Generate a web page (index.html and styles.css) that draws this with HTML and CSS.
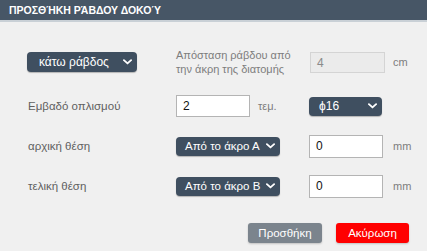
FILE: index.html
```html
<!DOCTYPE html>
<html>
<head>
<meta charset="utf-8">
<link rel="stylesheet" href="styles.css">
</head>
<body>
<div class="dialog">
  <div class="header">ΠΡΟΣΘΉΚΗ ΡΆΒΔΟΥ ΔΟΚΟΎ</div>
  <div class="form">
    <div class="select sel-bar"><span>κάτω ράβδος</span><svg class="chev" viewBox="0 0 10 6"><path d="M1 1 L5 4.6 L9 1" /></svg></div>
    <div class="hint">Απόσταση ράβδου από<br>την άκρη της διατομής</div>
    <div class="input disabled in-dist">4</div>
    <div class="unit">cm</div>

    <div class="label">Εμβαδό οπλισμού</div>
    <div class="input in-count">2</div>
    <div class="unit">τεμ.</div>
    <div class="select sel-dia"><span>ϕ16</span><svg class="chev" viewBox="0 0 10 6"><path d="M1 1 L5 4.6 L9 1" /></svg></div>
    <div></div>

    <div class="label">αρχική θέση</div>
    <div class="select sel-pos"><span>Από το άκρο Α</span><svg class="chev" viewBox="0 0 10 6"><path d="M1 1 L5 4.6 L9 1" /></svg></div>
    <div class="input in-pos">0</div>
    <div class="unit">mm</div>

    <div class="label">τελική θέση</div>
    <div class="select sel-pos"><span>Από το άκρο Β</span><svg class="chev" viewBox="0 0 10 6"><path d="M1 1 L5 4.6 L9 1" /></svg></div>
    <div class="input in-pos">0</div>
    <div class="unit">mm</div>
  </div>
  <div class="footer">
    <div class="btn btn-add">Προσθήκη</div>
    <div class="btn btn-cancel">Ακύρωση</div>
  </div>
</div>
</body>
</html>
```
FILE: styles.css
```css
html, body {
  margin: 0;
  padding: 0;
  background: #f0f0f0;
  font-family: "Liberation Sans", Arial, sans-serif;
}
.dialog {
  width: 427px;
  height: 251px;
  background: #f0f0f0;
}
.header {
  height: 20px;
  line-height: 21px;
  background: #475666;
  border-bottom: 2px solid #c9d0d6;
  color: #ffffff;
  font-weight: bold;
  font-size: 10.5px;
  padding-left: 9px;
  box-sizing: content-box;
}
.form {
  display: grid;
  grid-template-columns: 149px 82px 51px 84px auto;
  grid-template-rows: 30px 22px 22px 22px;
  row-gap: 18px;
  align-items: center;
  padding: 25px 0 0 27px;
}
.select {
  display: flex;
  align-items: center;
  justify-content: space-between;
  box-sizing: border-box;
  height: 20px;
  background: #3f4f60;
  color: #ffffff;
  border-radius: 4px;
  font-size: 12px;
  padding: 0 5px 0 12px;
  box-shadow: 0 1px 1px rgba(0,0,0,0.25);
}
.chev {
  width: 9px;
  height: 6px;
  flex: none;
  fill: none;
  stroke: #ffffff;
  stroke-width: 2;
  stroke-linecap: round;
  stroke-linejoin: round;
}
.sel-bar { width: 110px; }
.sel-dia { width: 73px; height: 19px; padding-left: 10px; }
.sel-pos { width: 104px; height: 19px; grid-column: span 2; padding-left: 9px; font-size: 11.5px; }
.hint {
  grid-column: span 2;
  font-size: 11px;
  line-height: 14px;
  color: #7d7d7d;
}
.label {
  font-size: 11.5px;
  color: #606060;
  padding-left: 1px;
}
.unit {
  font-size: 11px;
  color: #7d7d7d;
}
.input {
  box-sizing: border-box;
  height: 22px;
  background: #ffffff;
  border: 1px solid #b4b4b4;
  font-size: 12px;
  color: #111111;
  padding: 3px 0 0 6px;
}
.disabled {
  background: #ebebeb;
  border-color: #d4d4d4;
  color: #8a8a8a;
  width: 75px;
  height: 21px;
  margin-left: 1px;
}
.in-count { width: 74px; }
.in-pos { width: 74px; height: 23px; }
.footer {
  display: flex;
  justify-content: flex-end;
  gap: 14px;
  padding: 26px 18px 0 0;
}
.btn {
  width: 74px;
  height: 20px;
  box-sizing: border-box;
  border-radius: 3px;
  font-size: 11.5px;
  text-align: center;
  line-height: 20px;
  color: #ffffff;
  box-shadow: 0 1px 2px rgba(0,0,0,0.2);
}
.btn-add { background: #7b848d; }
.btn-cancel { background: #ff0000; width: 73px; }
```
